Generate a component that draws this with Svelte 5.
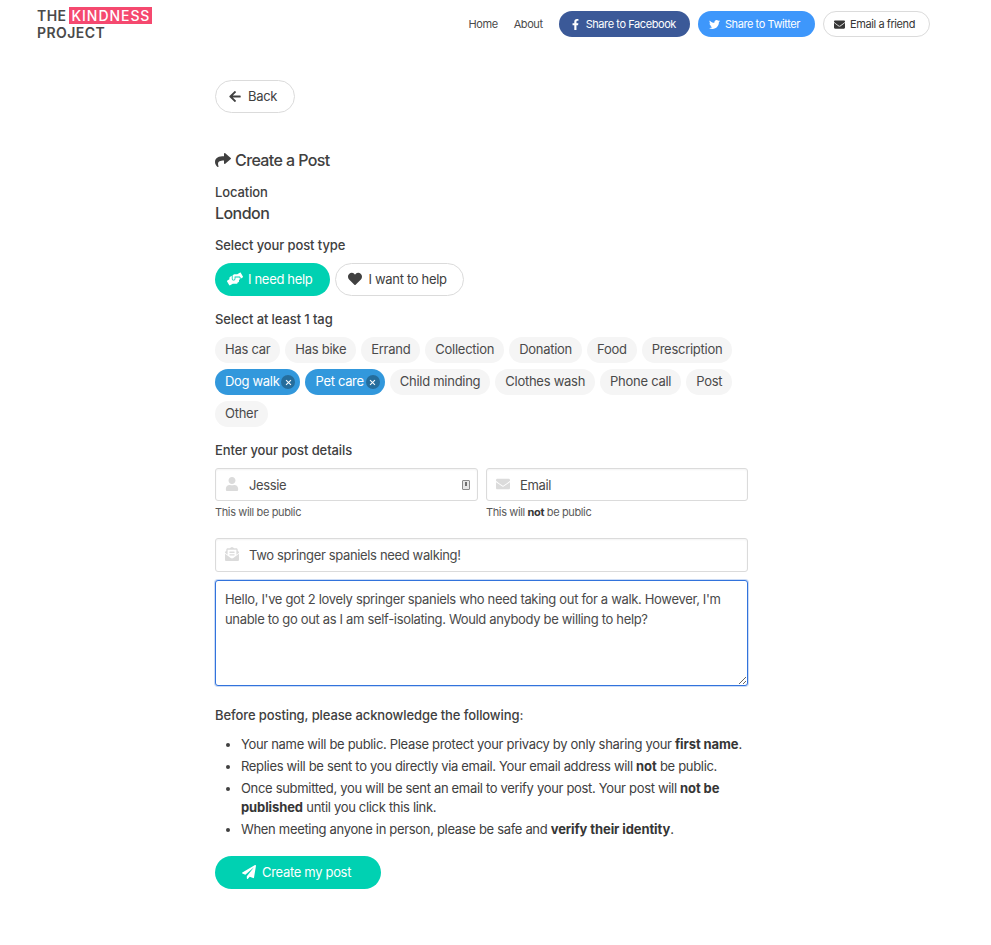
<script>
	const firstRow = ['Has car', 'Has bike', 'Errand', 'Collection', 'Donation', 'Food', 'Prescription'];
	const icons = {
		back: ['0 0 448 512', 'M257.5 445.1l-22.2 22.2c-9.4 9.4-24.6 9.4-33.9 0L7 273c-9.4-9.4-9.4-24.6 0-33.9L201.4 44.7c9.4-9.4 24.6-9.4 33.9 0l22.2 22.2c9.5 9.5 9.3 25-.4 34.3L136.6 216H424c13.3 0 24 10.7 24 24v32c0 13.3-10.7 24-24 24H136.6l120.5 114.8c9.8 9.3 10 24.8.4 34.3z'],
		share: ['0 0 512 512', 'M503.691 189.836L327.687 37.851C312.281 24.546 288 35.347 288 56.015v80.053C127.371 137.907 0 170.1 0 322.326c0 61.441 39.581 122.309 83.333 154.132 13.653 9.931 33.111-2.533 28.077-18.631C66.066 312.814 132.917 274.316 288 272.085V360c0 20.7 24.3 31.453 39.687 18.164l176.004-152c11.071-9.562 11.086-26.753 0-36.328z'],
		facebook: ['0 0 320 512', 'M279.14 288l14.22-92.66h-88.91v-60.13c0-25.35 12.42-50.06 52.24-50.06h40.42V6.26S260.43 0 225.36 0c-73.22 0-121.08 44.38-121.08 124.72v70.62H22.89V288h81.39v224h100.17V288z'],
		twitter: ['0 0 512 512', 'M459.37 151.716c.325 4.548.325 9.097.325 13.645 0 138.72-105.583 298.558-298.558 298.558-59.452 0-114.68-17.219-161.137-47.106 8.447.974 16.568 1.299 25.34 1.299 49.055 0 94.213-16.568 130.274-44.832-46.132-.975-84.792-31.188-98.112-72.772 6.498.974 12.995 1.624 19.818 1.624 9.421 0 18.843-1.3 27.614-3.573-48.081-9.747-84.143-51.98-84.143-102.985v-1.299c13.969 7.797 30.214 12.67 47.431 13.319-28.264-18.843-46.781-51.005-46.781-87.391 0-19.492 5.197-37.36 14.294-52.954 51.655 63.675 129.3 105.258 216.365 109.807-1.624-7.797-2.599-15.918-2.599-24.04 0-57.828 46.782-104.934 104.934-104.934 30.213 0 57.502 12.67 76.67 33.137 23.715-4.548 46.456-13.32 66.599-25.34-7.798 24.366-24.366 44.833-46.132 57.827 21.117-2.273 41.584-8.122 60.426-16.243-14.292 20.791-32.161 39.308-52.628 54.253z'],
		envelope: ['0 0 512 512', 'M502.3 190.8c3.9-3.1 9.7-.2 9.7 4.7V400c0 26.5-21.5 48-48 48H48c-26.5 0-48-21.5-48-48V195.6c0-5 5.7-7.8 9.7-4.7 22.4 17.4 52.1 39.5 154.1 113.6 21.1 15.4 56.7 47.8 92.2 47.6 35.7.3 72-32.8 92.3-47.6 102-74.1 131.6-96.3 154-113.7zM256 320c23.2.4 56.6-29.2 73.4-41.4 132.7-96.3 142.8-104.7 173.4-128.7 5.8-4.5 9.2-11.5 9.2-18.9v-19c0-26.5-21.5-48-48-48H48C21.5 64 0 85.5 0 112v19c0 7.4 3.4 14.3 9.2 18.9 30.6 23.9 40.7 32.4 173.4 128.7 16.8 12.2 50.2 41.8 73.4 41.4z'],
		heart: ['0 0 512 512', 'M462.3 62.6C407.5 15.9 326 24.3 275.7 76.2L256 96.5l-19.7-20.3C186.1 24.3 104.5 15.9 49.7 62.6c-62.8 53.6-66.1 149.8-9.9 207.9l193.5 199.8c12.5 12.9 32.8 12.9 45.3 0l193.5-199.8c56.3-58.1 53-154.3-9.8-207.9z'],
		hands: ['0 0 640 512', 'M488 192H336v56c0 39.7-32.3 72-72 72s-72-32.3-72-72V126.4l-64.9 39C107.8 176.9 96 197.8 96 220.2v47.3l-80 46.2C.7 322.5-4.6 342.1 4.3 357.4l80 138.6c8.8 15.3 28.4 20.5 43.7 11.7L231.4 448H368c35.3 0 64-28.7 64-64h16c17.7 0 32-14.3 32-32v-64h8c13.3 0 24-10.7 24-24v-48c0-13.3-10.7-24-24-24zm147.7-37.4L555.7 16C546.9.7 527.3-4.5 512 4.3L408.6 64H306.4c-12 0-23.7 3.4-33.9 9.7L239 94.6c-9.4 5.8-15 16.1-15 27.1V248c0 22.1 17.9 40 40 40s40-17.9 40-40v-88h184c30.9 0 56 25.1 56 56v28.5l80-46.2c15.3-8.9 20.5-28.4 11.7-43.7z'],
		user: ['0 0 448 512', 'M224 256c70.7 0 128-57.3 128-128S294.7 0 224 0 96 57.3 96 128s57.3 128 128 128zm89.6 32h-16.7c-22.2 10.2-46.9 16-72.9 16s-50.6-5.8-72.9-16h-16.7C60.2 288 0 348.2 0 422.4V464c0 26.5 21.5 48 48 48h352c26.5 0 48-21.5 48-48v-41.6c0-74.2-60.2-134.4-134.4-134.4z'],
		openText: ['0 0 512 512', 'M176 216h160c8.84 0 16-7.16 16-16v-16c0-8.84-7.16-16-16-16H176c-8.84 0-16 7.16-16 16v16c0 8.84 7.16 16 16 16zm-16 80c0 8.84 7.16 16 16 16h160c8.84 0 16-7.16 16-16v-16c0-8.84-7.16-16-16-16H176c-8.84 0-16 7.16-16 16v16zm96 121.13c-16.42 0-32.84-5.06-46.86-15.19L0 250.86V464c0 26.51 21.49 48 48 48h416c26.51 0 48-21.49 48-48V250.86L302.86 401.94c-14.02 10.12-30.44 15.19-46.86 15.19zm237.61-254.18c-8.85-6.94-17.24-13.47-29.61-22.81V96c0-26.51-21.49-48-48-48h-77.55c-3.04-2.2-5.87-4.26-9.04-6.56C312.6 29.17 279.2-.35 256 0c-23.2-.35-56.59 29.17-73.41 41.44-3.17 2.3-6 4.36-9.04 6.56H96c-26.51 0-48 21.49-48 48v44.14c-12.37 9.33-20.76 15.87-29.61 22.81A47.995 47.995 0 0 0 0 200.72v10.65l96 69.35V96h320v184.72l96-69.35v-10.65c0-14.74-6.78-28.67-18.39-37.77z'],
		plane: ['0 0 512 512', 'M476 3.2L12.5 270.6c-18.1 10.4-15.8 35.6 2.2 43.2L121 358.4l287.3-253.2c5.5-4.9 13.3 2.6 8.6 8.3L176 407v80.5c0 23.6 28.5 32.9 42.5 15.8L282 426l124.6 52.2c14.2 6 30.4-2.9 33-18.2l72-432C515 7.8 493.3-6.8 476 3.2z']
	};
	const secondRow = [
		{ name: 'Dog walk', active: true },
		{ name: 'Pet care', active: true },
		{ name: 'Child minding' },
		{ name: 'Clothes wash' },
		{ name: 'Phone call' },
		{ name: 'Post' }
	];
	const message = "Hello, I've got 2 lovely springer spaniels who need taking out for a walk. However, I'm unable to go out as I am self-isolating. Would anybody be willing to help?";
</script>

{#snippet icon(name, cls)}
	<svg class="icon {cls}" viewBox={icons[name][0]} aria-hidden="true"><path d={icons[name][1]} fill="currentColor" /></svg>
{/snippet}

<header class="navbar">
	<div class="logo">
		<div><span class="the">THE</span><span class="kindness">KINDNESS</span></div>
		<div class="project">PROJECT</div>
	</div>
	<nav class="nav">
		<a class="link" href="#home">Home</a>
		<a class="link" href="#about">About</a>
		<a class="share facebook" href="#fb">{@render icon('facebook', 'i-fb')}Share to Facebook</a>
		<a class="share twitter" href="#tw">{@render icon('twitter', 'i-tw')}Share to Twitter</a>
		<a class="share email" href="#mail">{@render icon('envelope', 'i-tw')}Email a friend</a>
	</nav>
</header>

<main class="content">
	<button class="btn back">{@render icon('back', 'i-back')}Back</button>

	<h2 class="title">{@render icon('share', 'i-title')}Create a Post</h2>

	<div class="label loc">Location</div>
	<div class="city">London</div>

	<div class="label type">Select your post type</div>
	<div class="types">
		<button class="btn primary need">{@render icon('hands', 'i-hands')}I need help</button>
		<button class="btn want">{@render icon('heart', 'i-heart')}I want to help</button>
	</div>

	<div class="label tagged">Select at least 1 tag</div>
	<div class="tags">
		{#each firstRow as t}
			<span class="tag">{t}</span>
		{/each}
		{#each secondRow as t}
			<span class="tag" class:active={t.active}>{t.name}{#if t.active}<span class="remove"></span>{/if}</span>
		{/each}
		<span class="tag">Other</span>
	</div>

	<div class="label details">Enter your post details</div>
	<div class="pair">
		<div>
			<div class="field">
				{@render icon('user', 'i-field')}
				<input class="input" value="Jessie" />
				<span class="pw"></span>
			</div>
			<p class="help">This will be public</p>
		</div>
		<div>
			<div class="field">
				{@render icon('envelope', 'i-field')}
				<input class="input" placeholder="Email" />
			</div>
			<p class="help">This will <strong>not</strong> be public</p>
		</div>
	</div>
	<div class="field subject">
		{@render icon('openText', 'i-field')}
		<input class="input" value="Two springer spaniels need walking!" />
	</div>
	<textarea class="message">{message}</textarea>

	<div class="label ack">Before posting, please acknowledge the following:</div>
	<ul class="rules">
		<li>Your name will be public. Please protect your privacy by only sharing your <strong>first name</strong>.</li>
		<li>Replies will be sent to you directly via email. Your email address will <strong>not</strong> be public.</li>
		<li>Once submitted, you will be sent an email to verify your post. Your post will <strong>not be published</strong> until you click this link.</li>
		<li>When meeting anyone in person, please be safe and <strong>verify their identity</strong>.</li>
	</ul>

	<button class="btn primary submit">{@render icon('plane', 'i-plane')}Create my post</button>
</main>

<style>
	:global(body) {
		background: #fff;
		color: #404040;
		font-family: Inter, "Liberation Sans", sans-serif;
		font-size: 13px;
		letter-spacing: -0.32px;
	}

	.icon {
		display: block;
		flex-shrink: 0;
	}

	.navbar {
		display: flex;
		justify-content: space-between;
		padding: 7px 61px 0 37px;
		height: 41px;
	}

	.logo {
		font-size: 14px;
		font-weight: 600;
		line-height: 17px;
		letter-spacing: 0.45px;
		color: #4a4a4a;
	}

	.kindness {
		display: inline-block;
		margin-left: 2px;
		padding: 0 2px 0 3px;
		background: #f5496f;
		color: #fff;
		font-weight: 500;
		letter-spacing: 0.95px;
	}

	.nav {
		display: flex;
		align-items: center;
		height: 34px;
		font-size: 11px;
		letter-spacing: -0.42px;
	}

	.link {
		color: #4a4a4a;
		text-decoration: none;
		margin-right: 16px;
	}

	.share {
		display: flex;
		align-items: center;
		height: 26px;
		box-sizing: border-box;
		padding: 0 14px 0 11px;
		border-radius: 13px;
		color: #fff;
		text-decoration: none;
		margin-right: 8px;
	}

	.facebook {
		background: #3b5998;
		padding-left: 13px;
	}

	.twitter {
		background: #3e97fb;
		padding-right: 15px;
	}

	.email {
		border: 1px solid #dbdbdb;
		color: #363636;
		margin-right: 0;
		padding-left: 10px;
	}

	.i-fb {
		width: 7px;
		height: 11px;
		margin-right: 7px;
	}

	.i-tw {
		width: 11px;
		height: 11px;
		margin-right: 5px;
	}

	.content {
		width: 533px;
		margin-left: 215px;
		padding-top: 32px;
		padding-bottom: 56px;
	}

	.btn {
		display: flex;
		align-items: center;
		height: 33px;
		box-sizing: border-box;
		padding: 0 17px 1px 13px;
		border: 1px solid #dbdbdb;
		border-radius: 17px;
		background: #fff;
		color: #404040;
		font: inherit;
		letter-spacing: inherit;
		cursor: pointer;
	}

	.i-back {
		width: 12px;
		height: 13px;
		margin-right: 7px;
	}

	.primary {
		background: #00d1b2;
		border-color: transparent;
		color: #fff;
	}

	.title {
		display: flex;
		align-items: center;
		margin: 37px 0 0;
		height: 20px;
		font-size: 16px;
		font-weight: 500;
		letter-spacing: -0.6px;
	}

	.i-title {
		width: 16px;
		height: 16px;
		margin-right: 4px;
	}

	.label {
		font-weight: 500;
		line-height: 16px;
		letter-spacing: -0.1px;
	}

	.loc {
		margin-top: 14px;
	}

	.city {
		margin-top: 3px;
		font-size: 16px;
		font-weight: 500;
		line-height: 20px;
		letter-spacing: -0.55px;
	}

	.type {
		margin-top: 14px;
	}

	.types {
		display: flex;
		gap: 5px;
		margin-top: 10px;
	}

	.need {
		padding-left: 11px;
	}

	.want {
		padding-left: 12px;
		padding-right: 16px;
	}

	.i-hands {
		width: 16px;
		height: 14px;
		margin-right: 5px;
	}

	.i-heart {
		width: 14px;
		height: 14px;
		margin-right: 6px;
	}

	.tagged {
		margin-top: 15px;
	}

	.tags {
		display: flex;
		flex-wrap: wrap;
		gap: 6px 5px;
		margin-top: 10px;
	}

	.tag {
		display: flex;
		align-items: center;
		height: 26px;
		box-sizing: border-box;
		padding: 0 10px 2px;
		border-radius: 13px;
		background: #f5f5f5;
		color: #4a4a4a;
		letter-spacing: -0.27px;
	}

	.tag.active {
		background: #3298dc;
		color: #fff;
		padding-right: 5px;
		letter-spacing: -0.32px;
	}

	.remove {
		position: relative;
		top: 1px;
		width: 14px;
		height: 14px;
		margin-left: 2px;
		border-radius: 50%;
		background: rgba(10, 10, 10, 0.3);
	}

	.remove::before,
	.remove::after {
		content: "";
		position: absolute;
		left: 3.5px;
		top: 6.5px;
		width: 7px;
		height: 1px;
		background: #fff;
		transform: rotate(45deg);
	}

	.remove::after {
		transform: rotate(-45deg);
	}

	.details {
		margin-top: 15px;
	}

	.pair {
		display: grid;
		grid-template-columns: 263px 262px;
		gap: 8px;
		margin-top: 10px;
	}

	.field {
		position: relative;
	}

	.input {
		display: block;
		width: 100%;
		height: 33px;
		box-sizing: border-box;
		padding: 0 10px 0 33px;
		border: 1px solid #dbdbdb;
		border-radius: 3px;
		box-shadow: inset 0 1px 2px rgba(10, 10, 10, 0.05);
		background: #fff;
		color: #4a4a4a;
		font: inherit;
		letter-spacing: -0.35px;
	}

	.input::placeholder {
		color: #4a4a4a;
		opacity: 1;
	}

	.i-field {
		position: absolute;
		left: 10px;
		top: 9px;
		width: 14px;
		height: 14px;
		color: #dbdbdb;
	}

	.pw {
		position: absolute;
		right: 8px;
		top: 12px;
		width: 6px;
		height: 8px;
		border: 1px solid #8a8a8a;
		border-radius: 1px;
		background: #e6e6e6;
	}

	.pw::before {
		content: "";
		position: absolute;
		left: 2px;
		top: 1px;
		width: 2px;
		height: 4px;
		background: #6f6f6f;
	}

	.help {
		margin: 4px 0 0;
		font-size: 11px;
		line-height: 14px;
		letter-spacing: -0.37px;
		color: #5a5a5a;
	}

	.subject {
		margin-top: 19px;
	}

	.subject .input {
		height: 34px;
	}

	.message {
		display: block;
		width: 100%;
		height: 106px;
		box-sizing: border-box;
		margin-top: 8px;
		padding: 8px 9px;
		border: 1px solid #3273dc;
		border-radius: 3px;
		box-shadow: 0 0 0 1px rgba(50, 115, 220, 0.25);
		background: #fff;
		color: #4a4a4a;
		font: inherit;
		letter-spacing: -0.33px;
		line-height: 20px;
		outline: none;
	}

	.ack {
		margin-top: 21px;
	}

	.rules {
		margin: 12px 0 0;
		padding-left: 26px;
		line-height: 19px;
	}

	.rules li {
		margin-bottom: 3px;
	}

	strong {
		font-weight: 700;
		color: #363636;
	}

	.rules strong {
		letter-spacing: -0.1px;
	}

	.submit {
		margin-top: 17px;
		width: 166px;
		padding: 0 0 1px 26px;
	}

	.i-plane {
		width: 14px;
		height: 14px;
		margin-right: 6px;
	}
</style>
